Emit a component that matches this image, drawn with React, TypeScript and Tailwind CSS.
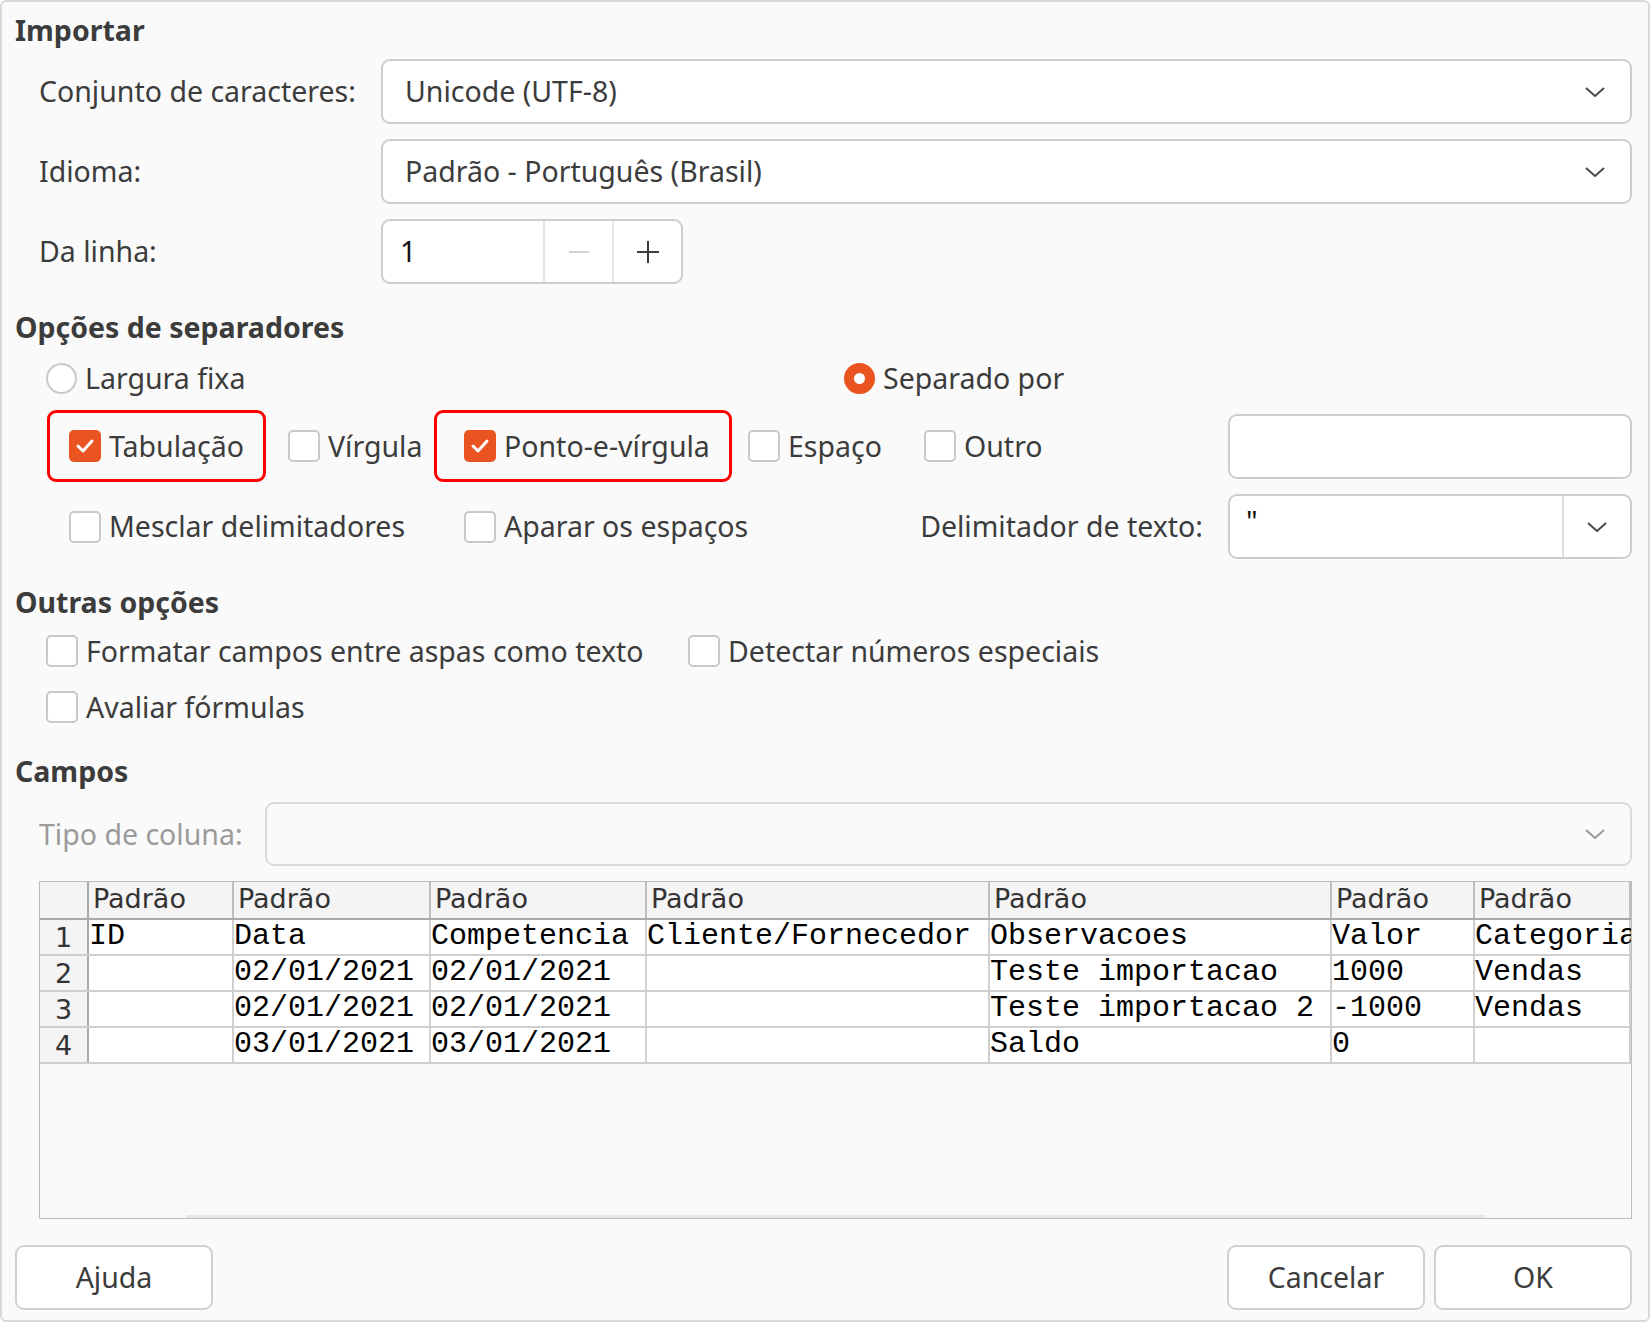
import React from 'react';

const ui = { fontFamily: '"Noto Sans", "Open Sans", sans-serif' };
const mono = { fontFamily: '"Liberation Mono", "DejaVu Sans Mono", monospace' };
const grid = { fontFamily: '"DejaVu Sans", "Noto Sans", sans-serif' };

function Chevron({ light = false }: { light?: boolean }) {
  return (
    <svg width="22" height="12" viewBox="0 0 22 12" className="shrink-0">
      <polyline
        points="2,2 11,10 20,2"
        fill="none"
        stroke={light ? '#9a9a9a' : '#4a4a4a'}
        strokeWidth="2"
        strokeLinejoin="round"
      />
    </svg>
  );
}

function Check({ checked = false, label }: { checked?: boolean; label: string }) {
  return (
    <div className="flex items-center gap-[8px]">
      {checked ? (
        <div className="flex h-[32px] w-[32px] items-center justify-center rounded-[5px] bg-[#e95420]">
          <svg width="20" height="16" viewBox="0 0 20 16">
            <polyline points="3,8 8,13 17,3" fill="none" stroke="#ffffff" strokeWidth="3" strokeLinecap="round" strokeLinejoin="round" />
          </svg>
        </div>
      ) : (
        <div className="h-[32px] w-[32px] rounded-[5px] border-2 border-[#c9c9c9] bg-white" />
      )}
      <span className="whitespace-nowrap">{label}</span>
    </div>
  );
}

function Radio({ checked = false, label }: { checked?: boolean; label: string }) {
  return (
    <div className="flex items-center gap-[8px]">
      {checked ? (
        <div className="flex h-[31px] w-[31px] items-center justify-center rounded-full bg-[#e95420]">
          <div className="h-[11px] w-[11px] rounded-full bg-white" />
        </div>
      ) : (
        <div className="h-[31px] w-[31px] rounded-full border-2 border-[#c9c9c9] bg-white" />
      )}
      <span className="whitespace-nowrap">{label}</span>
    </div>
  );
}

function Combo({ value, className = '' }: { value: string; className?: string }) {
  return (
    <div className={`flex h-[65px] items-center justify-between rounded-[9px] border-2 border-[#cdcdcd] bg-white pl-[22px] pr-[24px] ${className}`}>
      <span>{value}</span>
      <Chevron />
    </div>
  );
}

const cols = [49, 145, 197, 216, 343, 342, 143, 156];
const rows = [
  ['ID', 'Data', 'Competencia', 'Cliente/Fornecedor', 'Observacoes', 'Valor', 'Categoria'],
  ['', '02/01/2021', '02/01/2021', '', 'Teste importacao', '1000', 'Vendas'],
  ['', '02/01/2021', '02/01/2021', '', 'Teste importacao 2', '-1000', 'Vendas'],
  ['', '03/01/2021', '03/01/2021', '', 'Saldo', '0', ''],
];

function Preview() {
  return (
    <div className="ml-[24px] mt-[15px] flex h-[338px] w-[1593px] flex-col overflow-hidden border border-[#bdbdbd] bg-[#f8f8f8]">
      <div className="flex h-[38px] shrink-0 border-b-2 border-[#a9a9a9] bg-[#f4f4f4]" style={grid}>
        {cols.map((w, i) => (
          <div
            key={i}
            className={`h-full shrink-0 whitespace-nowrap pl-[4px] text-[27px] leading-[34px] text-[#333333] ${i === 0 ? 'border-r-2 border-[#a9a9a9]' : 'border-r-2 border-[#bdbdbd]'}`}
            style={{ width: w }}
          >
            {i === 0 ? '' : 'Padrão'}
          </div>
        ))}
      </div>
      {rows.map((r, ri) => (
        <div key={ri} className="flex h-[36px] shrink-0 border-b-2 border-[#cfcfcf]">
          <div
            className="h-full shrink-0 border-r-2 border-[#a9a9a9] bg-[#f4f4f4] text-center text-[27px] leading-[36px] text-[#333333]"
            style={{ width: cols[0], ...grid }}
          >
            {ri + 1}
          </div>
          {cols.slice(1).map((w, ci) => (
            <div
              key={ci}
              className="h-full shrink-0 whitespace-pre border-r-2 border-[#cfcfcf] bg-white text-[30px] leading-[32px] text-black"
              style={{ width: w, ...mono }}
            >
              {r[ci] ?? ''}
            </div>
          ))}
        </div>
      ))}
      <div className="flex-1" />
      <div className="ml-[146px] mr-[146px] h-[3px] bg-[#e6e6e6]" />
    </div>
  );
}

export default function App() {
  return (
    <div
      className="h-[1322px] w-[1650px] overflow-hidden rounded-[6px] border-2 border-[#d9d9d9] bg-[#fafafa] pl-[13px] pr-[16px] pt-[8px] text-[28.5px] text-[#3c3c3c]"
      style={ui}
    >
      {/* Importar */}
      <div className="flex h-[40px] items-center font-bold">Importar</div>

      <div className="mt-[9px] flex items-center">
        <div className="w-[366px] pl-[24px]">Conjunto de caracteres:</div>
        <Combo value="Unicode (UTF-8)" className="flex-1" />
      </div>
      <div className="mt-[15px] flex items-center">
        <div className="w-[366px] pl-[24px]">Idioma:</div>
        <Combo value="Padrão - Português (Brasil)" className="flex-1" />
      </div>
      <div className="mt-[15px] flex items-center">
        <div className="w-[366px] pl-[24px]">Da linha:</div>
        <div className="flex h-[65px] w-[302px] overflow-hidden rounded-[9px] border-2 border-[#cdcdcd] bg-white">
          <div className="flex w-[160px] items-center pl-[17px] text-[#111111]">1</div>
          <div className="flex w-[69px] items-center justify-center border-l-2 border-[#e6e6e6]">
            <div className="h-[2px] w-[20px] bg-[#d2d2d2]" />
          </div>
          <div className="flex flex-1 items-center justify-center border-l-2 border-[#e6e6e6]">
            <svg width="24" height="24" viewBox="0 0 24 24">
              <path d="M12 1v22M1 12h22" stroke="#3a3a3a" strokeWidth="2" />
            </svg>
          </div>
        </div>
      </div>

      {/* Opções de separadores */}
      <div className="mt-[23px] flex h-[40px] items-center font-bold">Opções de separadores</div>
      <div className="mt-[11px] flex h-[40px] items-center">
        <div className="ml-[31px] w-[798px]">
          <Radio label="Largura fixa" />
        </div>
        <Radio checked label="Separado por" />
      </div>

      <div className="mt-[12px] flex h-[72px] items-center">
        <div className="ml-[32px] flex h-[72px] w-[219px] items-center rounded-[9px] border-[3px] border-[#ff0000] pl-[19px]">
          <Check checked label="Tabulação" />
        </div>
        <div className="ml-[22px] w-[146px]">
          <Check label="Vírgula" />
        </div>
        <div className="flex h-[72px] w-[298px] items-center rounded-[9px] border-[3px] border-[#ff0000] pl-[27px]">
          <Check checked label="Ponto-e-vírgula" />
        </div>
        <div className="ml-[16px] w-[176px]">
          <Check label="Espaço" />
        </div>
        <div className="w-[304px]">
          <Check label="Outro" />
        </div>
        <div className="h-[65px] w-[404px] rounded-[9px] border-2 border-[#cdcdcd] bg-white" />
      </div>

      <div className="mt-[12px] flex h-[65px] items-center">
        <div className="ml-[54px] w-[395px]">
          <Check label="Mesclar delimitadores" />
        </div>
        <div className="flex-1">
          <Check label="Aparar os espaços" />
        </div>
        <div className="mr-[25px]">Delimitador de texto:</div>
        <div className="flex h-[65px] w-[404px] overflow-hidden rounded-[9px] border-2 border-[#cdcdcd] bg-white">
          <div className="flex-1 pl-[16px] pt-[4px] text-[#111111]">"</div>
          <div className="flex w-[68px] items-center justify-center border-l-2 border-[#dedede]">
            <Chevron />
          </div>
        </div>
      </div>

      {/* Outras opções */}
      <div className="mt-[23px] flex h-[40px] items-center font-bold">Outras opções</div>
      <div className="mt-[9px] flex h-[40px] items-center">
        <div className="ml-[31px] w-[642px]">
          <Check label="Formatar campos entre aspas como texto" />
        </div>
        <Check label="Detectar números especiais" />
      </div>
      <div className="mt-[16px] flex h-[40px] items-center">
        <div className="ml-[31px]">
          <Check label="Avaliar fórmulas" />
        </div>
      </div>

      {/* Campos */}
      <div className="mt-[24px] flex h-[40px] items-center font-bold">Campos</div>
      <div className="mt-[11px] flex items-center">
        <div className="w-[250px] pl-[24px] text-[#9b9b9b]">Tipo de coluna:</div>
        <div className="flex h-[64px] flex-1 items-center justify-end rounded-[9px] border-2 border-[#dadada] bg-[#fafafa] pr-[24px]">
          <Chevron light />
        </div>
      </div>

      <Preview />

      <div className="mt-[26px] flex h-[65px] items-center">
        <button className="h-[65px] w-[198px] rounded-[9px] border-2 border-[#d0d0d0] bg-white text-[28.5px] text-[#3c3c3c]">Ajuda</button>
        <div className="flex-1" />
        <button className="h-[65px] w-[198px] rounded-[9px] border-2 border-[#d0d0d0] bg-white text-[28.5px] text-[#3c3c3c]">Cancelar</button>
        <button className="ml-[9px] h-[65px] w-[198px] rounded-[9px] border-2 border-[#d0d0d0] bg-white text-[28.5px] text-[#3c3c3c]">OK</button>
      </div>
    </div>
  );
}
